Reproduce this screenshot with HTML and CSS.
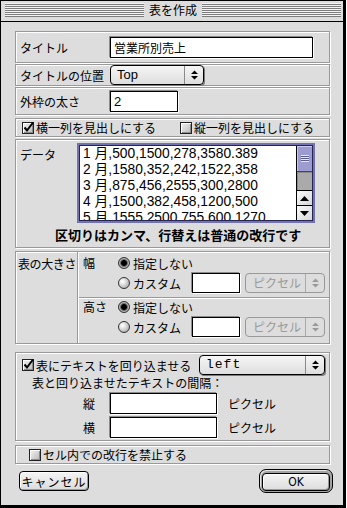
FILE: index.html
```html
<!DOCTYPE html>
<html lang="ja">
<head>
    <meta charset="UTF-8">
    <meta name="viewport" content="width=device-width, initial-scale=1.0">
    <title>表を作成</title>
    <link rel="stylesheet" href="styles.css">
</head>
<body>

<div class="window">
    <div class="titlebar">
        <span class="stripes"></span>
        <span class="title">表を作成</span>
        <span class="stripes"></span>
    </div>

    <div class="content">
        <!-- タイトル -->
        <div class="group row g-title">
            <label class="label" for="titleInput">タイトル</label>
            <input class="field field-title" id="titleInput" type="text" value="営業所別売上">
        </div>

        <div class="group row g-pos">
            <span class="label">タイトルの位置</span>
            <div class="popup popup-pos">
                <span class="popup-text">Top</span>
                <span class="popup-arrows">
                    <svg width="7" height="10" viewBox="0 0 7 10"><path d="M0 4 L3.5 0.5 L7 4 Z M0 6 L3.5 9.5 L7 6 Z" fill="#000"/></svg>
                </span>
            </div>
        </div>

        <div class="group row g-border">
            <label class="label" for="borderInput">外枠の太さ</label>
            <input class="field field-border" id="borderInput" type="text" value="2">
        </div>

        <div class="group row g-heads">
            <span class="check-item check-first">
                <span class="check"><svg width="12" height="12" viewBox="0 0 12 12"><path d="M2.5 5.5 L5 8.5 L11 0.5" stroke="#000" stroke-width="2" fill="none"/></svg></span>
                横一列を見出しにする
            </span>
            <span class="check-item">
                <span class="check"></span>
                縦一列を見出しにする
            </span>
        </div>

        <!-- データ -->
        <div class="group g-data">
            <div class="data-row">
                <span class="data-label">データ</span>
                <div class="data-box">
                    <div class="data-text">1 月,500,1500,278,3580.389
2 月,1580,352,242,1522,358
3 月,875,456,2555,300,2800
4 月,1500,382,458,1200,500
5 月,1555,2500,755,600,1270</div>
                    <div class="scrollbar">
                        <div class="thumb"><span class="grip"></span></div>
                        <div class="track"></div>
                        <div class="arrow"><svg width="9" height="5" viewBox="0 0 9 5"><path d="M0 5 L4.5 0 L9 5 Z" fill="#000"/></svg></div>
                        <div class="arrow"><svg width="9" height="5" viewBox="0 0 9 5"><path d="M0 0 L4.5 5 L9 0 Z" fill="#000"/></svg></div>
                    </div>
                </div>
            </div>
            <div class="data-note">区切りはカンマ、行替えは普通の改行です</div>
        </div>

        <!-- 表の大きさ -->
        <div class="group g-size">
            <div class="size-label">表の大きさ</div>
            <div class="size-dims">
                <div class="size-row size-row-w">
                    <span class="dim-label">幅</span>
                    <div class="options">
                        <div class="option"><span class="radio on"></span>指定しない</div>
                        <div class="option option-custom">
                            <span class="option-name"><span class="radio"></span>カスタム</span>
                            <input class="field field-size" type="text" value="">
                            <div class="popup popup-unit disabled">
                                <span class="popup-text">ピクセル</span>
                                <span class="popup-arrows">
                                    <svg width="7" height="10" viewBox="0 0 7 10"><path d="M0 4 L3.5 0.5 L7 4 Z M0 6 L3.5 9.5 L7 6 Z" fill="#999"/></svg>
                                </span>
                            </div>
                        </div>
                    </div>
                </div>
                <div class="size-row size-row-h">
                    <span class="dim-label">高さ</span>
                    <div class="options">
                        <div class="option"><span class="radio on"></span>指定しない</div>
                        <div class="option option-custom">
                            <span class="option-name"><span class="radio"></span>カスタム</span>
                            <input class="field field-size" type="text" value="">
                            <div class="popup popup-unit disabled">
                                <span class="popup-text">ピクセル</span>
                                <span class="popup-arrows">
                                    <svg width="7" height="10" viewBox="0 0 7 10"><path d="M0 4 L3.5 0.5 L7 4 Z M0 6 L3.5 9.5 L7 6 Z" fill="#999"/></svg>
                                </span>
                            </div>
                        </div>
                    </div>
                </div>
            </div>
        </div>

        <!-- 回り込み -->
        <div class="group g-wrap">
            <div class="wrap-head">
                <span class="check-item">
                    <span class="check"><svg width="12" height="12" viewBox="0 0 12 12"><path d="M2.5 5.5 L5 8.5 L11 0.5" stroke="#000" stroke-width="2" fill="none"/></svg></span>
                    表にテキストを回り込ませる
                </span>
                <div class="popup popup-align">
                    <span class="popup-text popup-mono">left</span>
                    <span class="popup-arrows">
                        <svg width="7" height="10" viewBox="0 0 7 10"><path d="M0 4 L3.5 0.5 L7 4 Z M0 6 L3.5 9.5 L7 6 Z" fill="#000"/></svg>
                    </span>
                </div>
            </div>
            <div class="wrap-caption">表と回り込ませたテキストの間隔：</div>
            <div class="gap-row">
                <span class="gap-label">縦</span>
                <input class="field field-gap" type="text" value="">
                <span class="unit">ピクセル</span>
            </div>
            <div class="gap-row gap-row-2">
                <span class="gap-label">横</span>
                <input class="field field-gap" type="text" value="">
                <span class="unit">ピクセル</span>
            </div>
        </div>

        <div class="group row g-nobreak">
            <span class="check-item">
                <span class="check"></span>
                セル内での改行を禁止する
            </span>
        </div>

        <div class="buttons">
            <button class="btn btn-cancel">キャンセル</button>
            <div class="btn-ring">
                <button class="btn btn-ok">OK</button>
            </div>
        </div>
    </div>
</div>

</body>
</html>
```

FILE: styles.css
```css
* {
    box-sizing: border-box;
}

body {
    margin: 0;
    background-color: #ffffff;
    color: #000;
    font-family: "Noto Sans CJK JP", sans-serif;
    font-size: 12px;
}

.window {
    width: 346px;
    height: 508px;
    background-color: #dddddd;
    border: 1px solid #000;
    border-right-width: 3px;
    border-bottom-width: 3px;
}

/* Заголовок окна */
.titlebar {
    height: 21px;
    display: flex;
    align-items: flex-start;
    padding: 2px 2px 0 4px;
    border-bottom: 1px solid #000;
}

.stripes {
    flex: 1;
    height: 14px;
    background: repeating-linear-gradient(to bottom, #f4f4f4 0 1px, #7c7c7c 1px 2px);
}

.title {
    padding: 0 5px;
    line-height: 14px;
}

.content {
    padding: 9px 0 0 14px;
}

.group {
    width: 315px;
    border: 1px solid #999;
    box-shadow: 1px 1px 0 #fff, inset 1px 1px 0 #fff;
}

.row {
    display: flex;
    align-items: center;
    padding-left: 4px;
}

.label {
    width: 90px;
    white-space: nowrap;
}

.g-title { height: 32px; }
.g-pos { height: 22px; margin-top: 1px; }
.g-border { height: 28px; margin-top: 1px; }
.g-heads { height: 19px; margin-top: 3px; padding-left: 6px; }
.g-data { height: 109px; margin-top: 2px; }
.g-size { height: 93px; margin-top: 3px; }
.g-wrap { height: 89px; margin-top: 8px; }
.g-nobreak { height: 19px; margin-top: 4px; padding-left: 13px; }

/* Поля ввода */
.field {
    height: 21px;
    padding: 0 3px;
    border: 1px solid #000;
    background-color: #fff;
    box-shadow: -1px -1px 0 #8c8c8c, 1px 1px 0 #fff;
    font-family: "Noto Sans CJK JP", sans-serif;
    font-size: 12px;
    color: #000;
    outline: none;
}

.field-title { width: 203px; }
.field-border { width: 68px; font-family: "Liberation Sans", sans-serif; font-size: 13px; }
.field-size { width: 48px; height: 20px; }
.field-gap { width: 107px; }

/* Всплывающие меню */
.popup {
    display: flex;
    height: 20px;
    border: 1px solid #000;
    border-radius: 4px;
    background: linear-gradient(#f6f6f6, #dedede);
    box-shadow: 1px 1px 0 #7a7a7a;
}

.popup-text {
    flex: 1;
    padding-left: 6px;
    line-height: 18px;
    font-family: "Liberation Sans", sans-serif;
    font-size: 13px;
}

.popup-mono {
    font-family: "Liberation Mono", monospace;
    letter-spacing: 1px;
}

.popup-arrows {
    width: 19px;
    display: flex;
    align-items: center;
    justify-content: center;
    border-left: 1px solid #8a8a8a;
}

.popup-pos { width: 94px; }
.popup-align { width: 126px; margin-left: auto; }

.popup-unit {
    width: 80px;
    margin-left: 5px;
}

.popup.disabled {
    border-color: #999;
    box-shadow: none;
    background: #dddddd;
    color: #999;
}

.popup.disabled .popup-text {
    font-family: "Noto Sans CJK JP", sans-serif;
    font-size: 12px;
    padding-left: 7px;
}

.popup.disabled .popup-arrows {
    border-left-color: #aaa;
}

/* Флажки и переключатели */
.check-item {
    display: flex;
    align-items: center;
    gap: 2px;
}

.check-first {
    width: 158px;
}

.check {
    width: 12px;
    height: 12px;
    border: 1px solid #222;
    background: linear-gradient(135deg, #f4f4f4, #b8b8b8);
    box-shadow: inset 1px 1px 0 #fff, inset -1px -1px 0 #8a8a8a;
}

.check svg {
    display: block;
    margin: -1px 0 0 -1px;
    overflow: visible;
}

.radio {
    width: 12px;
    height: 12px;
    margin-right: 3px;
    border-radius: 50%;
    border: 1px solid #333;
    background: radial-gradient(circle at 35% 35%, #fff 0, #f0f0f0 20%, #a8a8a8 85%);
}

.radio.on {
    background: radial-gradient(circle, #000 0 2.5px, #444 3px, #bbb 4.5px, #777 6px);
}

/* Данные */
.g-data {
    padding: 3px 0 0 4px;
}

.data-row {
    display: flex;
}

.data-label {
    width: 57px;
    padding-top: 4px;
    line-height: 16px;
}

.data-box {
    width: 238px;
    height: 80px;
    display: flex;
    background-color: #fff;
    border: 2px solid #7272b2;
    box-shadow: inset 1px 1px 0 #262650, inset -1px -1px 0 #262650;
    padding: 1px;
}

.data-text {
    flex: 1;
    padding-left: 3px;
    overflow: hidden;
    white-space: pre;
    font-family: "Liberation Sans", "Noto Sans CJK JP", sans-serif;
    font-size: 13.8px;
    line-height: 16px;
}

.scrollbar {
    width: 16px;
    display: flex;
    flex-direction: column;
    border-left: 1px solid #000;
}

.thumb {
    height: 26px;
    display: flex;
    align-items: center;
    justify-content: center;
    background-color: #9c9cd0;
    border-bottom: 1px solid #44446e;
    box-shadow: inset 1px 1px 0 #c8c8ee;
}

.grip {
    width: 8px;
    height: 7px;
    background: repeating-linear-gradient(to bottom, #e6e6ff 0 1px, #5c5c96 1px 2px);
}

.track {
    flex: 1;
    background-color: #aaaaaa;
    box-shadow: inset 1px 1px 0 #888;
}

.arrow {
    height: 15px;
    display: flex;
    align-items: center;
    justify-content: center;
    border-top: 1px solid #000;
    background: linear-gradient(135deg, #fafafa, #d6d6d6);
}

.data-note {
    margin-top: 4px;
    padding-left: 35px;
    font-weight: bold;
    font-size: 13px;
    line-height: 16px;
}

/* Размер таблицы */
.g-size {
    display: flex;
}

.size-label {
    width: 62px;
    padding: 4px 0 0 2px;
    line-height: 16px;
    white-space: nowrap;
    letter-spacing: -0.4px;
    border-right: 1px solid #999;
}

.size-dims {
    flex: 1;
    border-left: 1px solid #fff;
}

.size-row {
    display: flex;
    padding-left: 4px;
}

.size-row-w {
    height: 46px;
    padding-top: 3px;
    border-bottom: 1px solid #999;
}

.size-row-h {
    border-top: 1px solid #fff;
}

.dim-label {
    width: 35px;
    line-height: 16px;
}

.options {
    display: flex;
    flex-direction: column;
    gap: 2px;
}

.option {
    display: flex;
    align-items: center;
    height: 16px;
}

.option-custom {
    height: 20px;
}

.option-name {
    width: 74px;
    display: flex;
    align-items: center;
}

/* Обтекание */
.g-wrap {
    padding: 2px 4px 0 6px;
}

.wrap-head {
    display: flex;
    align-items: center;
    height: 20px;
}

.wrap-caption {
    padding-left: 10px;
    line-height: 16px;
}

.gap-row {
    display: flex;
    align-items: center;
    margin-top: 2px;
    padding-left: 61px;
}

.gap-row-2 {
    margin-top: 3px;
}

.gap-label {
    width: 27px;
}

.unit {
    margin-left: 11px;
}

/* Кнопки */
.buttons {
    width: 318px;
    display: flex;
    justify-content: space-between;
    align-items: center;
    margin-top: 5px;
    padding-left: 4px;
}

.btn {
    padding: 0;
    border: 1px solid #000;
    border-radius: 4px;
    background: linear-gradient(#f4f4f4, #dcdcdc);
    box-shadow: inset 1px 1px 0 #fff, inset -1px -1px 0 #9a9a9a;
    color: #000;
    font-family: "Noto Sans CJK JP", sans-serif;
    font-size: 12px;
}

.btn-cancel {
    width: 70px;
    height: 20px;
    letter-spacing: 1px;
}

.btn-ring {
    width: 74px;
    height: 24px;
    padding: 2px;
    border: 1px solid #000;
    border-radius: 7px;
    background-color: #a4a4a4;
    box-shadow: inset 1px 1px 0 #e8e8e8;
}

.btn-ok {
    width: 100%;
    height: 100%;
    font-family: "DejaVu Sans Condensed", "DejaVu Sans", sans-serif;
}
```
